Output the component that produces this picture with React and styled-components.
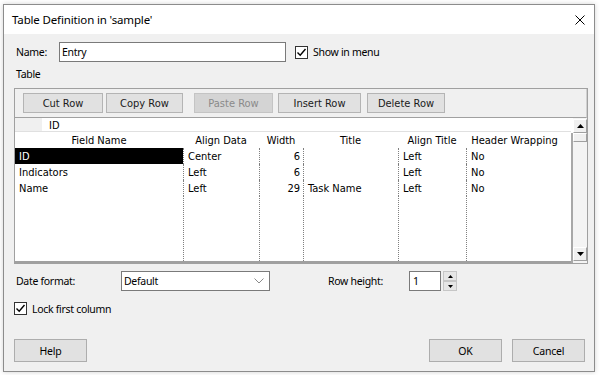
import React from 'react';
import styled, { createGlobalStyle } from 'styled-components';

const UI_FONT = '"Noto Sans", "Open Sans", "Liberation Sans", sans-serif';
const GRID_FONT = '"DejaVu Sans Condensed", "Liberation Sans", sans-serif';

const Global = createGlobalStyle`
  html, body { margin: 0; padding: 0; background: #ffffff; }
  body { font-family: ${UI_FONT}; font-size: 12px; color: #000; }
  * { box-sizing: border-box; }
`;

const Page = styled.div`
  width: 600px;
  height: 375px;
  padding: 4px 5px 3px 3px;
  background: #ffffff;
`;

const Dialog = styled.div`
  width: 592px;
  height: 368px;
  border: 1px solid #8c8c8c;
  display: flex;
  flex-direction: column;
  box-shadow: 0 0 5px rgba(0, 0, 0, 0.18);
`;

const TitleBar = styled.div`
  height: 29px;
  background: #ffffff;
  display: flex;
  align-items: center;
  justify-content: space-between;
  padding: 0 9px 0 8px;
  font-size: 11.5px;
  letter-spacing: -0.15px;
`;

const CloseIcon = styled.svg`
  width: 10px;
  height: 10px;
  display: block;
`;

const Body = styled.div`
  flex: 1;
  background: #f0f0f0;
  padding: 8px 6px 0 10px;
  display: flex;
  flex-direction: column;
  font-size: 10.5px;
  letter-spacing: -0.3px;
`;

const Row = styled.div`
  display: flex;
  align-items: center;
  height: ${(p) => p.$h || 20}px;
  margin-top: ${(p) => p.$mt || 0}px;
`;

const Label = styled.span`
  width: ${(p) => p.$w}px;
  padding-left: 2px;
  margin-left: ${(p) => p.$ml || 0}px;
  white-space: nowrap;
`;

const TextBox = styled.div`
  width: ${(p) => p.$w}px;
  height: 20px;
  background: #ffffff;
  border: 1px solid #7a7a7a;
  padding-left: ${(p) => p.$pl || 2}px;
  display: flex;
  align-items: center;
  justify-content: space-between;
  padding-right: 5px;
`;

const CheckWrap = styled.label`
  display: flex;
  align-items: center;
  gap: 5px;
  margin-left: ${(p) => p.$ml || 0}px;
`;

const CheckBox = styled.span`
  width: 13px;
  height: 13px;
  border: 1px solid #333333;
  background: #ffffff;
  display: inline-flex;
  align-items: center;
  justify-content: center;
`;

const Frame = styled.div`
  margin-top: 6px;
  height: 176px;
  border: 1px solid #a0a0a0;
  display: flex;
  flex-direction: column;
  letter-spacing: 0;
`;

const Toolbar = styled.div`
  height: 29px;
  display: flex;
  align-items: flex-start;
  padding: 4px 0 0 8px;
  border-bottom: 1px solid #a0a0a0;
  border-right: 1px solid #d0d0d0;
  background: #f0f0f0;
`;

const ToolButton = styled.button`
  width: ${(p) => p.$w}px;
  height: 20px;
  margin-left: ${(p) => p.$ml || 0}px;
  padding: 0;
  font-family: ${GRID_FONT};
  font-size: 11px;
  background: ${(p) => (p.disabled ? '#d4d4d4' : '#e1e1e1')};
  color: ${(p) => (p.disabled ? '#8a8a8a' : '#1a1a1a')};
  border: 1px solid ${(p) => (p.disabled ? '#c4c4c4' : '#b4b4b4')};
`;

const GridArea = styled.div`
  flex: 1;
  display: flex;
  background: #ffffff;
  font-family: ${GRID_FONT};
  font-size: 11px;
`;

const GridMain = styled.div`
  flex: 1;
  display: flex;
  flex-direction: column;
`;

const EditRow = styled.div`
  height: 14px;
  display: flex;
  border-bottom: 1px solid #e0e0e0;
`;

const EditStub = styled.div`
  width: 27px;
  background: #f0f0f0;
`;

const EditCell = styled.div`
  flex: 1;
  padding-left: 7px;
  padding-top: 1px;
  display: flex;
  align-items: center;
  background: #ffffff;
`;

const COLS = '168px 76px 44px 95px 68px 1fr';

const HeaderRow = styled.div`
  height: 16px;
  display: grid;
  grid-template-columns: ${COLS};
  align-items: center;
`;

const HeadCell = styled.div`
  text-align: center;
  white-space: nowrap;
  padding-right: ${(p) => p.$pr || 0}px;
`;

const GridBody = styled.div`
  flex: 1;
  display: grid;
  grid-template-columns: ${COLS};
  grid-template-rows: 16px 16px 16px 1fr;
  border-bottom: 2px solid #a0a0a0;
`;

const Cell = styled.div`
  display: flex;
  align-items: center;
  justify-content: ${(p) => (p.$right ? 'flex-end' : 'flex-start')};
  padding: ${(p) => (p.$right ? '0 3px 0 0' : '0 0 0 4px')};
  border-left: ${(p) => (p.$first ? 'none' : '1px dotted #808080')};
  background: ${(p) => (p.$sel ? '#000' : 'transparent')};
  color: ${(p) => (p.$sel ? '#fff' : '#000')};
  white-space: nowrap;
`;

const ScrollStrip = styled.div`
  width: 2px;
  background: #a8a8a8;
  margin-top: 15px;
`;

const ScrollBar = styled.div`
  width: 14px;
  display: flex;
  flex-direction: column;
  background: #f4f4f4;
  padding-top: 1px;
  padding-bottom: 2px;
`;

const ScrollButton = styled.div`
  height: ${(p) => p.$h || 14}px;
  border: 1px solid;
  border-color: #ffffff #a0a0a0 #a0a0a0 #ffffff;
  background: #f0f0f0;
  display: flex;
  align-items: center;
  justify-content: center;
`;

const ScrollTrack = styled.div`
  flex: 1;
`;

const Spin = styled.div`
  display: flex;
  flex-direction: column;
  margin-left: 2px;
  height: 20px;
`;

const SpinBtn = styled.div`
  width: 14px;
  height: 10px;
  background: #e6e6e6;
  border: 1px solid #c6c6c6;
  display: flex;
  align-items: center;
  justify-content: center;
`;

const ButtonRow = styled.div`
  display: flex;
  align-items: center;
  margin-top: 24px;
  padding-right: 3px;
`;

const Button = styled.button`
  width: 73px;
  height: 23px;
  padding: 0;
  background: #e1e1e1;
  border: 1px solid #adadad;
  font-family: ${UI_FONT};
  font-size: 10.5px;
  letter-spacing: -0.2px;
  color: #000;
  margin-left: ${(p) => p.$ml || 0}px;
`;

const Spacer = styled.div`
  flex: 1;
`;

const Check = () => (
  <CheckBox>
    <svg width="11" height="11" viewBox="0 0 11 11">
      <path d="M1.5 5.5 L4.2 8.2 L9.5 2" fill="none" stroke="#000" strokeWidth="1.4" />
    </svg>
  </CheckBox>
);

const Tri = ({ down, w = 7, h = 4 }) => (
  <svg width={w} height={h} viewBox={`0 0 ${w} ${h}`}>
    <path d={down ? `M0 0 L${w} 0 L${w / 2} ${h} Z` : `M0 ${h} L${w} ${h} L${w / 2} 0 Z`} fill="#000" />
  </svg>
);

const rows = [
  ['ID', 'Center', '6', '', 'Left', 'No'],
  ['Indicators', 'Left', '6', '', 'Left', 'No'],
  ['Name', 'Left', '29', 'Task Name', 'Left', 'No'],
];

const headers = ['Field Name', 'Align Data', 'Width', 'Title', 'Align Title', 'Header Wrapping'];

export default function App() {
  return (
    <Page>
      <Global />
      <Dialog>
        <TitleBar>
          <span>Table Definition in 'sample'</span>
          <CloseIcon viewBox="0 0 10 10">
            <path d="M0.5 0.5 L9.5 9.5 M9.5 0.5 L0.5 9.5" stroke="#000" strokeWidth="1" />
          </CloseIcon>
        </TitleBar>
        <Body>
          <Row>
            <Label $w={45}>Name:</Label>
            <TextBox $w={227}>Entry</TextBox>
            <CheckWrap $ml={9}>
              <Check />
              <span>Show in menu</span>
            </CheckWrap>
          </Row>
          <Row $h={16} $mt={4}>
            <Label $w={60}>Table</Label>
          </Row>
          <Frame>
            <Toolbar>
              <ToolButton $w={80}>Cut Row</ToolButton>
              <ToolButton $w={77} $ml={3}>Copy Row</ToolButton>
              <ToolButton $w={79} $ml={11} disabled>Paste Row</ToolButton>
              <ToolButton $w={83} $ml={5}>Insert Row</ToolButton>
              <ToolButton $w={78} $ml={6}>Delete Row</ToolButton>
            </Toolbar>
            <GridArea>
              <GridMain>
                <EditRow>
                  <EditStub />
                  <EditCell>ID</EditCell>
                </EditRow>
                <HeaderRow>
                  {headers.map((h, i) => (
                    <HeadCell key={h} $pr={i === 5 ? 8 : 0}>{h}</HeadCell>
                  ))}
                </HeaderRow>
                <GridBody>
                  {rows.map((r, ri) =>
                    r.map((c, ci) => (
                      <Cell
                        key={`${ri}-${ci}`}
                        $first={ci === 0}
                        $right={ci === 2}
                        $sel={ri === 0 && ci === 0}
                      >
                        {c}
                      </Cell>
                    ))
                  )}
                  {headers.map((h, ci) => (
                    <Cell key={`f-${h}`} $first={ci === 0} />
                  ))}
                </GridBody>
              </GridMain>
              <ScrollStrip />
              <ScrollBar>
                <ScrollButton>
                  <Tri />
                </ScrollButton>
                <ScrollButton $h={9} />
                <ScrollTrack />
                <ScrollButton>
                  <Tri down />
                </ScrollButton>
              </ScrollBar>
            </GridArea>
          </Frame>
          <Row $mt={7}>
            <Label $w={107}>Date format:</Label>
            <TextBox $w={149}>
              <span>Default</span>
              <svg width="10" height="6" viewBox="0 0 10 6">
                <path d="M0.5 0.5 L5 5 L9.5 0.5" fill="none" stroke="#8a8a8a" strokeWidth="1" />
              </svg>
            </TextBox>
            <Label $w={83} $ml={56}>Row height:</Label>
            <TextBox $w={32} $pl={3}>1</TextBox>
            <Spin>
              <SpinBtn>
                <Tri w={5} h={3} />
              </SpinBtn>
              <SpinBtn>
                <Tri down w={5} h={3} />
              </SpinBtn>
            </Spin>
          </Row>
          <Row $h={13} $mt={11}>
            <CheckWrap>
              <Check />
              <span>Lock first column</span>
            </CheckWrap>
          </Row>
          <ButtonRow>
            <Button>Help</Button>
            <Spacer />
            <Button>OK</Button>
            <Button $ml={10}>Cancel</Button>
          </ButtonRow>
        </Body>
      </Dialog>
    </Page>
  );
}
